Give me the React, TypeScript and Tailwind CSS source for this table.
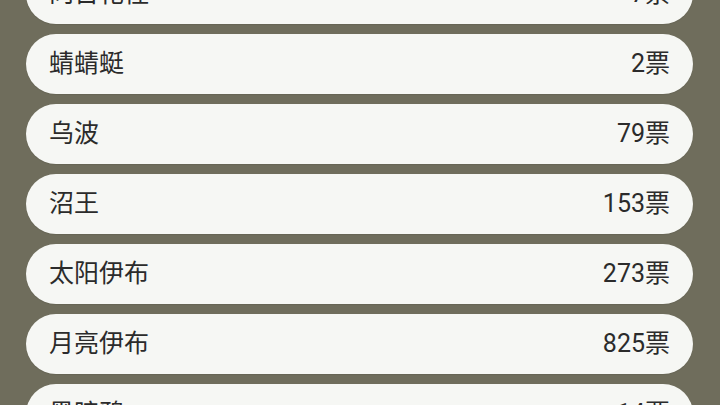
const rows = [
  { name: "向日花怪", votes: "7票" },
  { name: "蜻蜻蜓", votes: "2票" },
  { name: "乌波", votes: "79票" },
  { name: "沼王", votes: "153票" },
  { name: "太阳伊布", votes: "273票" },
  { name: "月亮伊布", votes: "825票" },
  { name: "黑暗鸦", votes: "14票" },
];

export default function App() {
  return (
    <div className="h-[405px] w-[720px] overflow-hidden bg-[#6f6d5c] font-['Roboto','Noto_Sans_CJK_SC',sans-serif]">
      <div className="-mt-[36px] flex flex-col gap-[10px] pl-[26px] pr-[27px]">
        {rows.map((r) => (
          <div
            key={r.name}
            className="flex h-[60px] items-center justify-between rounded-[30px] bg-[#f6f7f4] px-[23px] text-[25px] text-[#2b2b2b] shadow-[0_1px_1px_rgba(0,0,0,0.08)]"
          >
            <span>{r.name}</span>
            <span>{r.votes}</span>
          </div>
        ))}
      </div>
    </div>
  );
}
